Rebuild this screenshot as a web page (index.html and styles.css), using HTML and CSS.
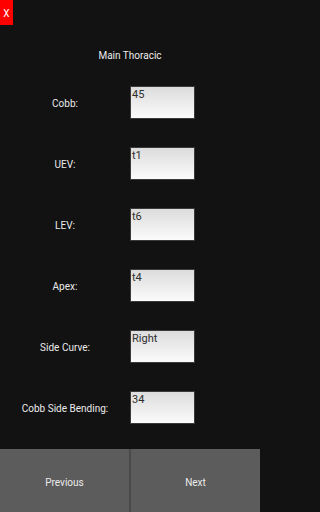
FILE: index.html
```html
<!DOCTYPE html>
<html>
<head>
<meta charset="utf-8">
<meta name="viewport" content="width=260">
<link rel="stylesheet" href="styles.css">
</head>
<body>
<div class="screen">
  <div class="top"><button class="close">X</button></div>
  <div class="title">Main Thoracic</div>
  <div class="form">
    <div class="row"><div class="label">Cobb:</div><div class="cell"><div class="field">45</div></div></div>
    <div class="row"><div class="label">UEV:</div><div class="cell"><div class="field">t1</div></div></div>
    <div class="row"><div class="label">LEV:</div><div class="cell"><div class="field">t6</div></div></div>
    <div class="row"><div class="label">Apex:</div><div class="cell"><div class="field">t4</div></div></div>
    <div class="row"><div class="label">Side Curve:</div><div class="cell"><div class="field">Right</div></div></div>
    <div class="row"><div class="label">Cobb Side Bending:</div><div class="cell"><div class="field">34</div></div></div>
  </div>
  <div class="nav">
    <button class="navbtn">Previous</button>
    <button class="navbtn">Next</button>
  </div>
</div>
</body>
</html>
```
FILE: styles.css
```css
html, body {
  margin: 0;
  padding: 0;
  background: #121212;
}
.screen {
  width: 260px;
  height: 512px;
  display: flex;
  flex-direction: column;
  font-family: Roboto, "Liberation Sans", sans-serif;
  color: #ebebeb;
  font-size: 10px;
}
.top {
  height: 25px;
  display: flex;
}
.close {
  width: 13px;
  height: 25px;
  margin: 0;
  padding: 1px 0 0;
  border: none;
  background: #ff0000;
  color: #ffffff;
  font-family: Roboto, "Liberation Sans", sans-serif;
  font-size: 10px;
}
.title {
  margin-top: 24px;
  height: 14px;
  line-height: 14px;
  text-align: center;
}
.form {
  margin-top: 23px;
  display: flex;
  flex-direction: column;
  gap: 29px;
}
.row {
  display: flex;
  height: 32px;
  align-items: center;
}
.label {
  width: 130px;
  text-align: center;
  padding-top: 2px;
}
.cell {
  width: 130px;
}
.field {
  box-sizing: border-box;
  width: 65px;
  height: 33px;
  border: 1px solid #3a3a3a;
  background: linear-gradient(to bottom, #dcdcdc, #fbfbfb);
  color: #2e2e2e;
  font-size: 11px;
  line-height: 13px;
  padding: 1px 1px;
}
.nav {
  margin-top: auto;
  height: 63px;
  display: flex;
  gap: 2px;
  background: #4a4a4a;
}
.navbtn {
  flex: 1;
  margin: 0;
  padding: 3px 0 0;
  border: none;
  background: #5c5c5c;
  color: #ebebeb;
  font-family: Roboto, "Liberation Sans", sans-serif;
  font-size: 10px;
}
```
